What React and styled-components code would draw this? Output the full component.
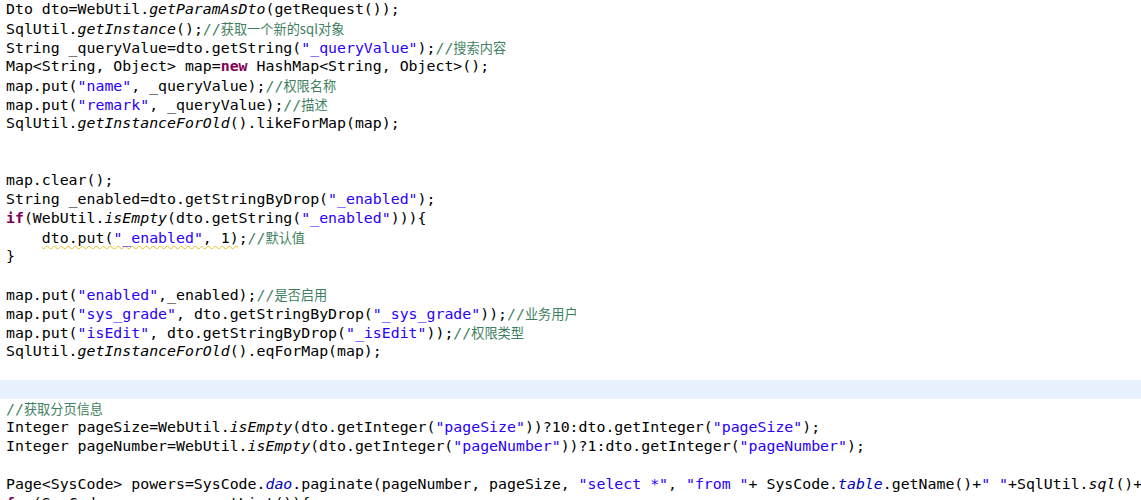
import React from 'react';
import styled, { createGlobalStyle } from 'styled-components';

const GlobalStyle = createGlobalStyle`
  html, body {
    margin: 0;
    padding: 0;
    background: #ffffff;
    overflow: hidden;
  }
`;

const Editor = styled.div`
  width: 1141px;
  height: 500px;
  overflow: hidden;
  background: #ffffff;
  font-family: 'DejaVu Sans Mono', 'Liberation Mono', 'Noto Sans CJK SC', monospace;
  font-size: 14.86px;
  color: #000000;
`;

const Line = styled.div`
  height: 19px;
  line-height: 19px;
  padding-left: 6px;
  white-space: pre;
  background: ${({ $current }) => ($current ? '#e8f2fe' : 'transparent')};
`;

const colors = {
  plain: '#000000',
  kw: '#7f0055',
  str: '#2a00ff',
  cmt: '#3f7f5f',
  stat: '#000000',
  field: '#0000c0',
};

const Tok = styled.span`
  color: ${({ $kind }) => colors[$kind]};
  font-weight: ${({ $kind }) => ($kind === 'kw' ? 'bold' : 'normal')};
  font-style: ${({ $kind }) => ($kind === 'stat' || $kind === 'field' ? 'italic' : 'normal')};
`;

const Cjk = styled.span`
  font-family: 'Noto Sans CJK SC', sans-serif;
  font-size: 13.2px;
`;

const Warning = styled.span`
  text-decoration: underline wavy #e8c020;
  text-decoration-thickness: 1px;
  text-underline-offset: 2px;
  text-decoration-skip-ink: none;
`;

// token helpers
const p = (t) => ['plain', t];
const k = (t) => ['kw', t];
const s = (t) => ['str', t];
const c = (t) => ['cmt', t];
const i = (t) => ['stat', t];
const f = (t) => ['field', t];

const lines = [
  [p('Dto dto=WebUtil.'), i('getParamAsDto'), p('(getRequest());')],
  [p('SqlUtil.'), i('getInstance'), p('();'), c('获取一个新的sql对象')],
  [p('String _queryValue=dto.getString('), s('"_queryValue"'), p(');'), c('搜索内容')],
  [p('Map<String, Object> map='), k('new'), p(' HashMap<String, Object>();')],
  [p('map.put('), s('"name"'), p(', _queryValue);'), c('权限名称')],
  [p('map.put('), s('"remark"'), p(', _queryValue);'), c('描述')],
  [p('SqlUtil.'), i('getInstanceForOld'), p('().likeForMap(map);')],
  [],
  [],
  [p('map.clear();')],
  [p('String _enabled=dto.getStringByDrop('), s('"_enabled"'), p(');')],
  [k('if'), p('(WebUtil.'), i('isEmpty'), p('(dto.getString('), s('"_enabled"'), p('))){')],
  'warn',
  [p('}')],
  [],
  [p('map.put('), s('"enabled"'), p(',_enabled);'), c('是否启用')],
  [p('map.put('), s('"sys_grade"'), p(', dto.getStringByDrop('), s('"_sys_grade"'), p('));'), c('业务用户')],
  [p('map.put('), s('"isEdit"'), p(', dto.getStringByDrop('), s('"_isEdit"'), p('));'), c('权限类型')],
  [p('SqlUtil.'), i('getInstanceForOld'), p('().eqForMap(map);')],
  [],
  'current',
  [c('获取分页信息')],
  [p('Integer pageSize=WebUtil.'), i('isEmpty'), p('(dto.getInteger('), s('"pageSize"'), p('))?10:dto.getInteger('), s('"pageSize"'), p(');')],
  [p('Integer pageNumber=WebUtil.'), i('isEmpty'), p('(dto.getInteger('), s('"pageNumber"'), p('))?1:dto.getInteger('), s('"pageNumber"'), p(');')],
  [],
  [p('Page<SysCode> powers=SysCode.'), f('dao'), p('.paginate(pageNumber, pageSize, '), s('"select *"'), p(', '), s('"from "'), p('+ SysCode.'), f('table'), p('.getName()+'), s('" "'), p('+SqlUtil.'), i('sql'), p('()+'), s('" order by id"'), p(');')],
  [k('for'), p('(SysCode p : powers.getList()){')],
];

const renderTok = ([kind, text], idx) => (
  <Tok key={idx} $kind={kind}>
    {kind === 'cmt' ? (
      <>
        {'//'}
        <Cjk>{text}</Cjk>
      </>
    ) : (
      text
    )}
  </Tok>
);

const App = () => {
  return (
    <Editor>
      <GlobalStyle />
      {lines.map((line, n) => {
        if (line === 'current') return <Line key={n} $current />;
        if (line === 'warn') {
          return (
            <Line key={n}>
              {'    '}
              <Warning>
                <Tok $kind="plain">dto.put(</Tok>
                <Tok $kind="str">"_enabled"</Tok>
                <Tok $kind="plain">, 1)</Tok>
              </Warning>
              {renderTok(p(';'), 'a')}
              {renderTok(c('默认值'), 'b')}
            </Line>
          );
        }
        return <Line key={n}>{line.length ? line.map(renderTok) : ' '}</Line>;
      })}
    </Editor>
  );
};

export default App;
